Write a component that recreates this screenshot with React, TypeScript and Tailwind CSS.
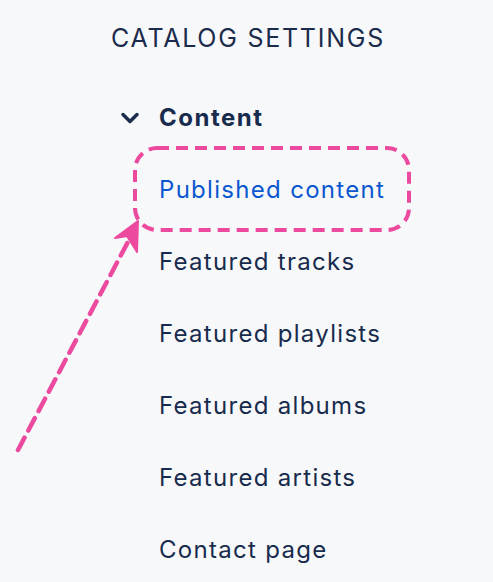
import { ChevronDown } from 'lucide-react';

const items = ['Published content', 'Featured tracks', 'Featured playlists', 'Featured albums', 'Featured artists', 'Contact page'];

const App: React.FC = () => {
  return (
    <div className="relative w-[493px] h-[582px] overflow-hidden bg-[#f7f8fa] font-['Inter','Liberation_Sans',sans-serif] text-[#172b4d]">
      <div className="pl-[111px] pt-[22px]">
        <h2 className="text-[25px] leading-[33px] tracking-[1.75px] text-[#1b2b4b]">CATALOG SETTINGS</h2>
        <div className="mt-[47px] flex items-center gap-[15px] pl-[5px]">
          <ChevronDown size={28} strokeWidth={3} className="text-[#1b2b4b]" />
          <span className="text-[24px] font-bold leading-[32px] tracking-[1.5px]">Content</span>
        </div>
        <ul className="mt-[40px] pl-[48px]">
          {items.map((item, i) => (
            <li
              key={item}
              className={`h-[72px] text-[24px] leading-[32px] tracking-[1.3px] ${i === 0 ? 'text-[#0b57d0]' : 'text-[#172b4d]'}`}
            >
              {item}
            </li>
          ))}
        </ul>
      </div>

      {/* annotation overlay */}
      <svg className="absolute inset-0 pointer-events-none" width="493" height="582" viewBox="0 0 493 582">
        <rect x="135" y="148" width="274" height="82" rx="22" fill="none" stroke="#ec4a9f" strokeWidth="4" strokeDasharray="12 7" />
        <line x1="18" y1="450" x2="130" y2="238" stroke="#ec4a9f" strokeWidth="4.5" strokeDasharray="14 8" strokeLinecap="round" />
        <polygon points="138,221 115,238 127,236 137,252" fill="#ec4a9f" stroke="#ec4a9f" strokeWidth="2" strokeLinejoin="round" />
      </svg>
    </div>
  );
};

export default App;
